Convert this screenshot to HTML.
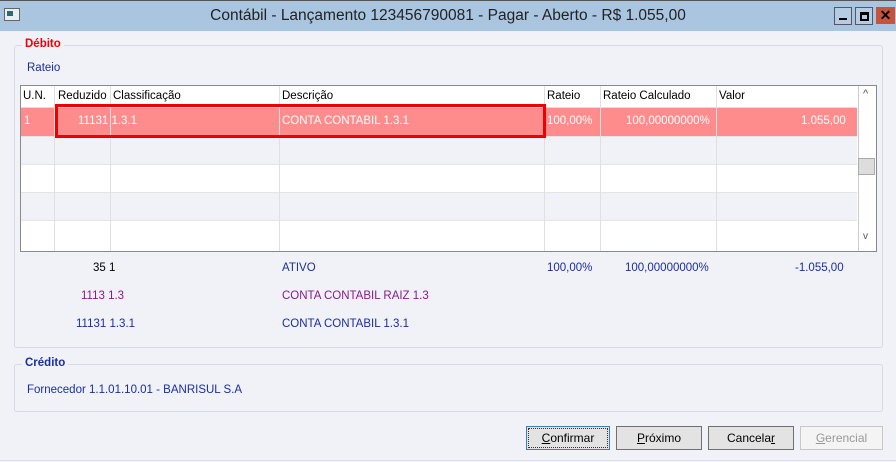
<!DOCTYPE html>
<html><head><style>
body{margin:0;width:896px;height:462px;background:#f0f2f8;font-family:"Liberation Sans",sans-serif;font-size:11.5px;position:relative;overflow:hidden}
.a{position:absolute;white-space:nowrap}
.title{left:0;top:0;width:896px;height:30px;background:#a9c5e0;border-top:1px solid #555}
.gb{position:absolute;border:1px solid #d4dbe6;border-radius:3px}
.grid{position:absolute;left:20px;top:85px;width:855px;height:165px;border:1px solid #8a8a8a;background:#fff;overflow:hidden}
.c{position:absolute;border-right:1px solid #e0e0e0;height:100%;top:0}
.btn{position:absolute;top:426px;height:22px;border:1px solid #707070;background:#e3e3e3;text-align:center;line-height:22px;font-size:12px}
</style></head><body>
<div class="a title"></div>
<div class="a" style="left:4px;top:8px;width:14px;height:11px;background:#e8eef2;border:1px solid #666"><div style="position:absolute;left:2px;top:2px;width:6px;height:5px;background:#2a6a70"></div></div>
<div class="a" style="left:0;width:896px;top:7px;text-align:center;font-size:15.5px;color:#222">Contábil - Lançamento 123456790081 - Pagar - Aberto - R$ 1.055,00</div>
<div class="a" style="left:834px;top:7px;width:16px;height:16px;border:1px solid #556;background:#b6cce2"><div style="position:absolute;left:4px;top:10px;width:8px;height:2px;background:#000"></div></div>
<div class="a" style="left:855px;top:7px;width:16px;height:16px;border:1px solid #556;background:#b6cce2"><div style="position:absolute;left:4px;top:4px;width:5px;height:4px;border:2px solid #000;border-top-width:3px"></div></div>
<div class="a" style="left:876px;top:7px;width:19px;height:17px;background:#c7533d;color:#000;font-weight:bold;font-size:14px;text-align:center;line-height:17px">✕</div>

<div class="gb" style="left:14px;top:45px;width:867px;height:301px"></div>
<div class="a" style="left:22px;top:38px;background:#f0f2f8;padding:0 3px;color:#e00;font-weight:bold">Débito</div>
<div class="a" style="left:27px;top:62px;color:#1a2ea0">Rateio</div>
<div class="grid">
 <div class="a" style="left:0;top:0;width:836px;height:21px;border-bottom:1px solid #ddd;background:#fff"></div>
 <div class="a" style="left:0;top:22px;width:836px;height:28px;background:#ff8c8c"></div>
 <div class="a" style="left:0;top:50px;width:836px;height:28px;background:#f0f2f8"></div>
 <div class="a" style="left:0;top:106px;width:836px;height:28px;background:#f0f2f8"></div>
 <div class="a" style="left:0;top:50px;width:836px;border-top:1px solid #e4e4e4"></div>
 <div class="a" style="left:0;top:78px;width:836px;border-top:1px solid #e4e4e4"></div>
 <div class="a" style="left:0;top:106px;width:836px;border-top:1px solid #e4e4e4"></div>
 <div class="a" style="left:0;top:134px;width:836px;border-top:1px solid #e4e4e4"></div>
 <div class="c" style="left:33px"></div><div class="c" style="left:89px"></div><div class="c" style="left:258px"></div><div class="c" style="left:523px"></div><div class="c" style="left:579px"></div><div class="c" style="left:695px"></div>
 <div class="a" style="left:2px;top:4px">U.N.</div>
 <div class="a" style="left:37px;top:4px">Reduzido</div>
 <div class="a" style="left:92px;top:4px">Classificação</div>
 <div class="a" style="left:261px;top:4px">Descrição</div>
 <div class="a" style="left:526px;top:4px">Rateio</div>
 <div class="a" style="left:582px;top:4px">Rateio Calculado</div>
 <div class="a" style="left:698px;top:4px">Valor</div>
 <div class="a" style="left:3px;top:29px;color:#fff">1</div>
 <div class="a" style="left:57px;top:29px;color:#fff">11131 1.3.1</div>
 <div class="a" style="left:261px;top:29px;color:#fff">CONTA CONTABIL 1.3.1</div>
 <div class="a" style="left:526px;top:29px;color:#fff">100,00%</div>
 <div class="a" style="left:605px;top:29px;color:#fff">100,00000000%</div>
 <div class="a" style="left:780px;top:29px;color:#fff">1.055,00</div>
 <div class="a" style="left:34px;top:18px;width:491px;height:34px;border:3px solid #e00;box-sizing:border-box"></div>
 <div class="a" style="left:837px;top:0;width:17px;height:165px;background:#fff;border-left:1px solid #ccc"></div>
 <div class="a" style="left:837px;top:72px;width:17px;height:17px;background:#ddd;border:1px solid #aaa;box-sizing:border-box"></div>
 <div class="a" style="left:842px;top:2px;color:#555;font-size:11px">^</div>
 <div class="a" style="left:842px;top:145px;color:#555;font-size:10px">v</div>
</div>
<div class="a" style="left:93px;top:262px">35 1</div>
<div class="a" style="left:282px;top:262px;color:#1a2ea0">ATIVO</div>
<div class="a" style="left:547px;top:262px;color:#1a2ea0">100,00%</div>
<div class="a" style="left:625px;top:262px;color:#1a2ea0">100,00000000%</div>
<div class="a" style="left:795px;top:262px;color:#1a2ea0">-1.055,00</div>
<div class="a" style="left:81px;top:290px;color:#8b1a8b">1113 1.3</div>
<div class="a" style="left:282px;top:290px;color:#8b1a8b">CONTA CONTABIL RAIZ 1.3</div>
<div class="a" style="left:76px;top:318px;color:#1a2ea0">11131 1.3.1</div>
<div class="a" style="left:282px;top:318px;color:#1a2ea0">CONTA CONTABIL 1.3.1</div>

<div class="gb" style="left:14px;top:364px;width:867px;height:46px"></div>
<div class="a" style="left:22px;top:357px;background:#f0f2f8;padding:0 3px;color:#1a2ea0;font-weight:bold">Crédito</div>
<div class="a" style="left:27px;top:384px;color:#1a2ea0">Fornecedor 1.1.01.10.01 - BANRISUL S.A</div>
<div class="a" style="left:0;top:460px;width:896px;border-top:1px solid #dde"></div>

<div class="btn" style="left:526px;width:82px;border-color:#3c7fb1;outline:1px dotted #333;outline-offset:-3px"><u>C</u>onfirmar</div>
<div class="btn" style="left:616px;width:84px"><u>P</u>róximo</div>
<div class="btn" style="left:708px;width:84px">Cancela<u>r</u></div>
<div class="btn" style="left:800px;width:81px;border-color:#c8c8c8;background:#f4f4f4;color:#999"><u>G</u>erencial</div>
</body></html>
